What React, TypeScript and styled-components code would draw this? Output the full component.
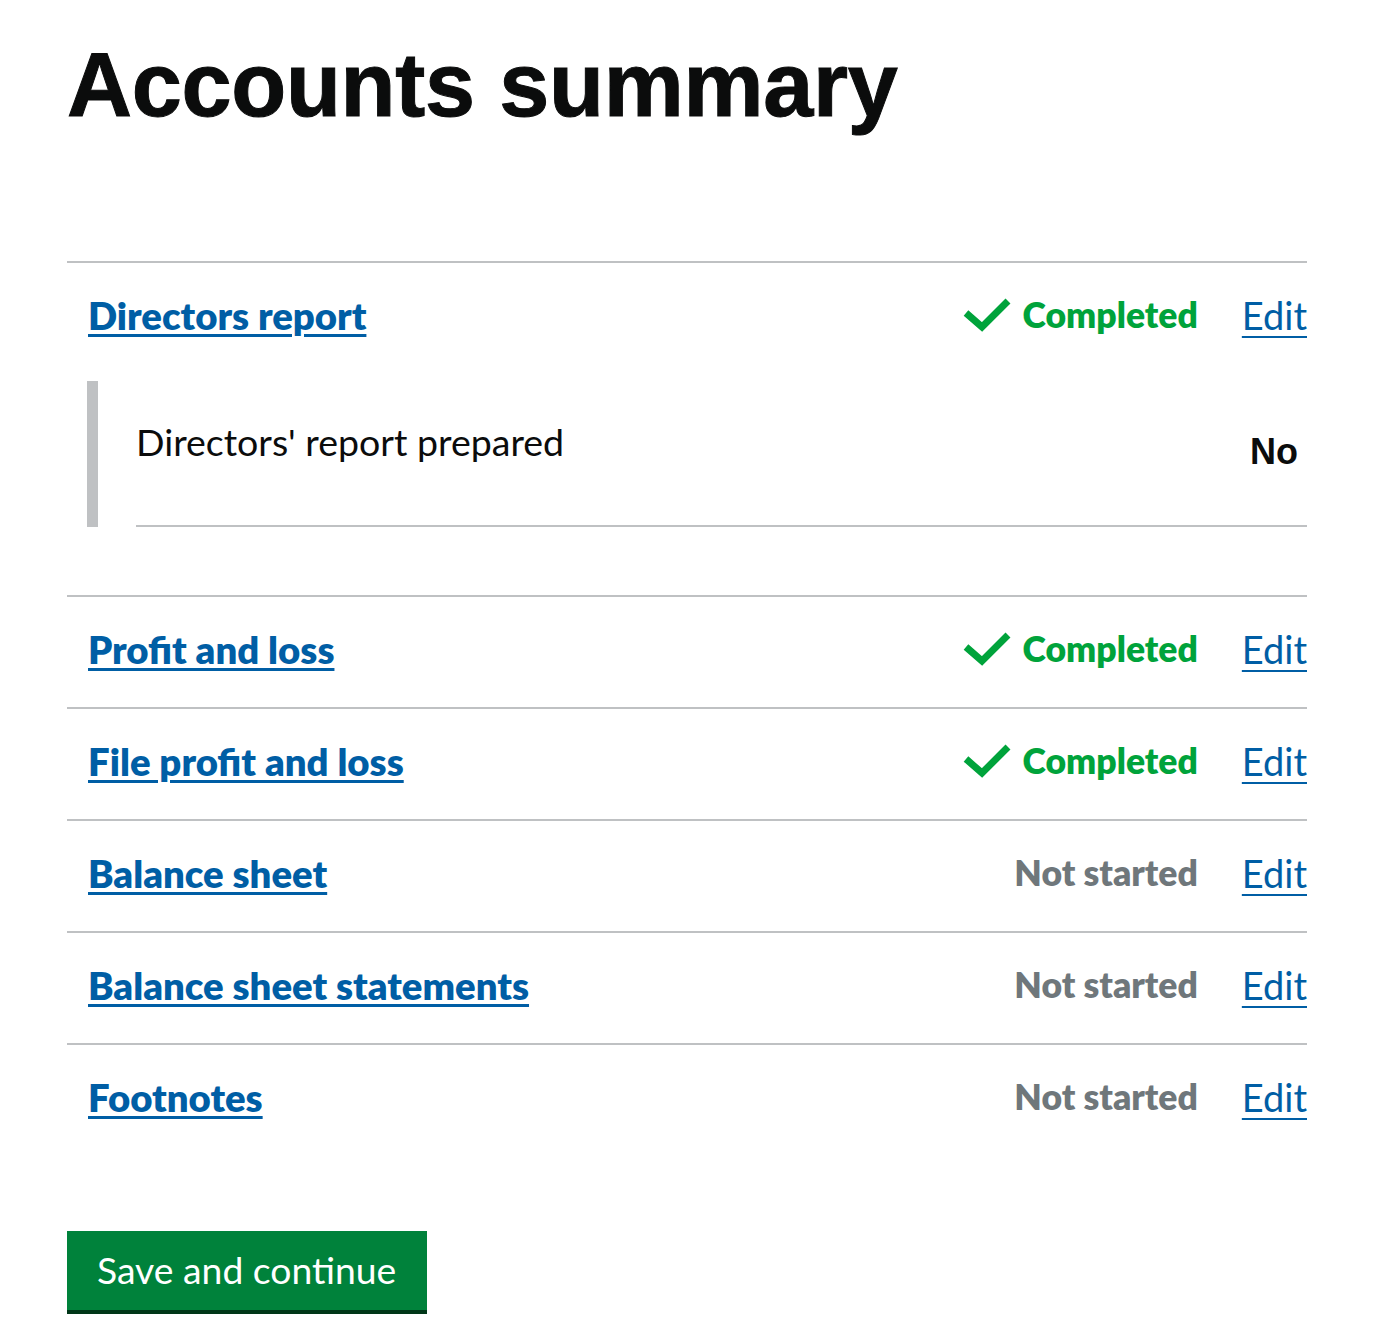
import React from "react";
import styled, { createGlobalStyle } from "styled-components";

const Global = createGlobalStyle`
  html, body { margin: 0; padding: 0; background: #ffffff; }
  body { font-family: Lato, "Noto Sans", sans-serif; color: #0b0c0c; }
`;

const Page = styled.main`
  width: 1240px;
  padding: 40px 0 20px 67px;
`;

const Title = styled.h1`
  margin: 0 0 131px 0;
  font-family: "Liberation Sans", Arial, sans-serif;
  font-weight: 700;
  font-size: 90px;
  line-height: 1;
  letter-spacing: -0.3px;
  color: #0b0c0c;
  -webkit-text-stroke: 1px #0b0c0c;
`;

const List = styled.section`
  display: flex;
  flex-direction: column;
`;

const Section = styled.div`
  border-top: 2px solid #bfc1c3;
  padding: 32px 0 38px 21px;
`;

const Head = styled.div`
  display: flex;
  align-items: center;
  height: 40px;
`;

const SectionLink = styled.a`
  font-family: Lato, "Noto Sans", sans-serif;
  font-weight: 800;
  font-size: 38.3px;
  line-height: 40px;
  color: #005ea5;
  text-decoration: underline;
  text-decoration-thickness: 3px;
  text-underline-offset: 4px;
  flex: 1;
`;

const Status = styled.span<{ $done: boolean }>`
  display: flex;
  align-items: center;
  gap: 12px;
  font-weight: 800;
  font-size: 35.5px;
  line-height: 40px;
  color: ${(p) => (p.$done ? "#00a33b" : "#6f777b")};
  margin-right: 44px;
`;

const EditLink = styled.a`
  font-weight: 400;
  font-size: 38px;
  line-height: 40px;
  color: #005ea5;
  text-decoration: underline;
  text-decoration-thickness: 2px;
  text-underline-offset: 6px;
`;

const Inset = styled.div`
  margin: 46px 0 30px -1px;
  border-left: 11px solid #bfc1c3;
  padding-left: 38px;
  height: 146px;
  box-sizing: border-box;
  display: flex;
`;

const SummaryRow = styled.div`
  flex: 1;
  display: flex;
  justify-content: space-between;
  border-bottom: 2px solid #bfc1c3;
`;

const Key = styled.span`
  font-size: 37.5px;
  line-height: 40px;
  padding-top: 41px;
`;

const Value = styled.span`
  font-family: "Liberation Sans", Arial, sans-serif;
  font-weight: 700;
  font-size: 36px;
  line-height: 40px;
  padding-top: 51px;
  padding-right: 9px;
`;

const Button = styled.button`
  margin-top: 76px;
  font-family: Lato, "Noto Sans", sans-serif;
  font-size: 37.3px;
  line-height: 40px;
  color: #ffffff;
  background: #00823b;
  border: 0;
  box-shadow: 0 4px 0 #003618;
  padding: 19px 30px 20px;
  width: 360px;
  text-align: left;
  cursor: pointer;
`;

const Check = () => (
  <svg width="48" height="34" viewBox="0 0 48 34" aria-hidden="true">
    <path d="M3 15 L19 29 L45 3" fill="none" stroke="#00a33b" strokeWidth="7" strokeLinejoin="miter" />
  </svg>
);

type Item = { title: string; done: boolean; inset?: boolean };

const items: Item[] = [
  { title: "Directors report", done: true, inset: true },
  { title: "Profit and loss", done: true },
  { title: "File profit and loss", done: true },
  { title: "Balance sheet", done: false },
  { title: "Balance sheet statements", done: false },
  { title: "Footnotes", done: false },
];

export default function App() {
  return (
    <>
      <Global />
      <Page>
        <Title>Accounts summary</Title>
        <List>
          {items.map((it) => (
            <Section key={it.title}>
              <Head>
                <SectionLink href="#">{it.title}</SectionLink>
                <Status $done={it.done}>
                  {it.done && <Check />}
                  {it.done ? "Completed" : "Not started"}
                </Status>
                <EditLink href="#">Edit</EditLink>
              </Head>
              {it.inset && (
                <Inset>
                  <SummaryRow>
                    <Key>Directors' report prepared</Key>
                    <Value>No</Value>
                  </SummaryRow>
                </Inset>
              )}
            </Section>
          ))}
        </List>
        <Button>Save and continue</Button>
      </Page>
    </>
  );
}
